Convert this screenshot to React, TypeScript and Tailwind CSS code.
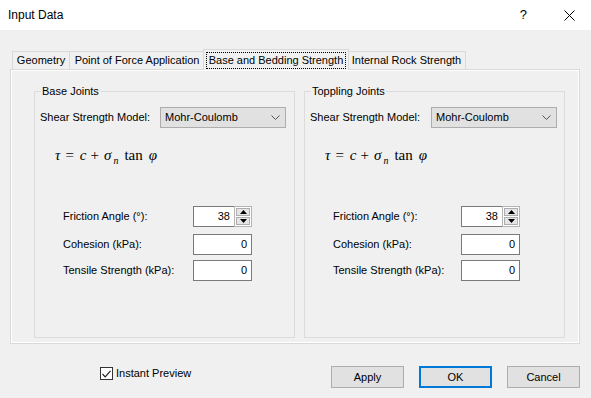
import React from "react";

const font = "font-['Liberation_Sans',Arial,sans-serif]";

function Chevron() {
    return (
        <svg width="9" height="5" viewBox="0 0 9 5" className="shrink-0">
            <polyline points="0.5,0.5 4.5,4.5 8.5,0.5" fill="none" stroke="#555" strokeWidth="1" />
        </svg>
    );
}

function Field({ value, spin }: { value: string; spin?: boolean }) {
    if (spin) {
        return (
            <div className="flex w-[59px] h-[21px]">
                <div className="flex-1 h-full bg-white border border-r-0 border-[#7a7a7a] flex items-center justify-end pr-[4px]">{value}</div>
                <div className="w-[18px] h-full bg-white border border-[#b4b4b4] flex flex-col gap-[1px] p-[1px]">
                    <div className="flex-1 bg-[#e5e5e5] border border-[#adadad] flex items-center justify-center">
                        <svg width="7" height="4" viewBox="0 0 7 4"><polygon points="0,4 3.5,0 7,4" fill="#000" /></svg>
                    </div>
                    <div className="flex-1 bg-[#e5e5e5] border border-[#adadad] flex items-center justify-center">
                        <svg width="7" height="4" viewBox="0 0 7 4"><polygon points="0,0 3.5,4 7,0" fill="#000" /></svg>
                    </div>
                </div>
            </div>
        );
    }
    return (
        <div className="w-[59px] h-[21px] bg-white border border-[#7a7a7a] flex items-center justify-end pr-[4px]">{value}</div>
    );
}

// τ = c + σn tan φ, spaced out like the equation bitmap
function Equation() {
    return (
        <div className="mt-[18px] pl-[20px] h-[18px] flex items-baseline text-[15px] leading-[18px] font-['Liberation_Serif','Times_New_Roman',serif] whitespace-nowrap">
            <i>τ</i>
            <span className="ml-[5px]">=</span>
            <i className="ml-[6px]">c</i>
            <span className="ml-[4px]">+</span>
            <i className="ml-[5px]">σ</i>
            <i className="ml-[2px] text-[10px] translate-y-[4px]">n</i>
            <span className="ml-[6px]">tan</span>
            <i className="ml-[6px]">φ</i>
        </div>
    );
}

function JointGroup({ title, ddLabel, inLabel }: { title: string; ddLabel: string; inLabel: string }) {
    const rows = [
        { label: "Friction Angle (°):", value: "38", spin: true, mt: "mt-[42px]" },
        { label: "Cohesion (kPa):", value: "0", spin: false, mt: "mt-[7px]" },
        { label: "Tensile Strength (kPa):", value: "0", spin: false, mt: "mt-[5px]" },
    ];
    return (
        <div className="relative w-[261px] h-[247px] border border-[#dcdcdc]">
            <span className="absolute -top-[9px] left-[6px] px-[1px] leading-[16px] bg-[#f0f0f0]">{title}</span>
            <div className="flex items-center pl-[5px] mt-[15px]">
                <span className={ddLabel}>Shear Strength Model:</span>
                <div className="w-[126px] h-[21px] bg-[#e1e1e1] border border-[#adadad] flex items-center pl-[4px] pr-[5px]">
                    <span className="flex-1">Mohr-Coulomb</span>
                    <Chevron />
                </div>
            </div>
            <Equation />
            {rows.map((r, i) => (
                <div key={i} className={"flex items-center pl-[28px] " + r.mt}>
                    <span className={inLabel}>{r.label}</span>
                    <Field value={r.value} spin={r.spin} />
                </div>
            ))}
        </div>
    );
}

export default function App() {
    return (
        <div className={"w-[591px] h-[398px] bg-[#f0f0f0] text-[11px] text-black flex flex-col " + font}>
            <div className="h-[30px] bg-white flex items-center pl-[8px] text-[12px] shrink-0">
                <span>Input Data</span>
                <span className="ml-auto mr-[37px] text-[13px]">?</span>
                <svg width="11" height="11" viewBox="0 0 11 11" className="mr-[16px]">
                    <line x1="0.5" y1="0.5" x2="10.5" y2="10.5" stroke="#000" strokeWidth="1" />
                    <line x1="10.5" y1="0.5" x2="0.5" y2="10.5" stroke="#000" strokeWidth="1" />
                </svg>
            </div>

            <div className="pt-[19px] pl-[10px]">
                <div className="flex items-end h-[20px] pl-[2px] relative z-10">
                    <div className="w-[58px] h-[18px] border border-b-0 border-[#d9d9d9] flex items-center justify-center">Geometry</div>
                    <div className="w-[135px] h-[18px] border border-b-0 border-l-0 border-[#d9d9d9] flex items-center justify-center">Point of Force Application</div>
                    <div className="w-[146px] h-[21px] -mb-[1px] -mx-[2px] bg-[#f0f0f0] border border-b-0 border-[#d9d9d9] relative z-10 p-[2px] pb-[1px]">
                        <div className="h-full border border-dotted border-black flex items-center justify-center">Base and Bedding Strength</div>
                    </div>
                    <div className="w-[119px] h-[18px] border border-b-0 border-[#d9d9d9] flex items-center justify-center">Internal Rock Strength</div>
                </div>
                <div className="w-[570px] h-[275px] border border-[#d9d9d9] shadow-[inset_0_0_0_1px_#ffffff] pl-[23px] pt-[21px] flex gap-[9px]">
                    <JointGroup title="Base Joints" ddLabel="w-[120px]" inLabel="w-[130px]" />
                    <JointGroup title="Toppling Joints" ddLabel="w-[121px]" inLabel="w-[128px]" />
                </div>
            </div>

            <div className="flex items-start mt-[22px] pr-[11px]">
                <div className="flex items-center ml-[100px] mt-[1px] h-[13px] gap-[3px]">
                    <div className="w-[13px] h-[13px] bg-white border border-[#333] flex items-center justify-center">
                        <svg width="9" height="8" viewBox="0 0 9 8"><polyline points="0.5,4 3.2,6.8 8.5,0.8" fill="none" stroke="#222" strokeWidth="1.2" /></svg>
                    </div>
                    <span>Instant Preview</span>
                </div>
                <div className="ml-auto flex gap-[15px]">
                    <button className="w-[73px] h-[22px] bg-[#e1e1e1] border border-[#adadad]">Apply</button>
                    <button className="w-[73px] h-[22px] bg-[#e1e1e1] border-2 border-[#0078d7]">OK</button>
                    <button className="w-[73px] h-[22px] bg-[#e1e1e1] border border-[#adadad]">Cancel</button>
                </div>
            </div>
        </div>
    );
}
